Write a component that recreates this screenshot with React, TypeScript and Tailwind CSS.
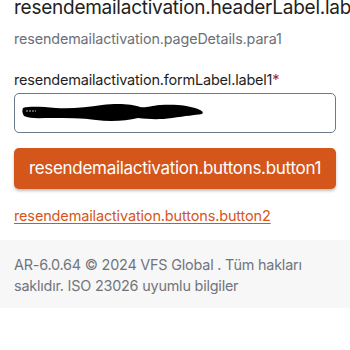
export default function App() {
  return (
    <div className="w-[350px] h-[350px] overflow-hidden bg-white font-['Inter',sans-serif]">
      <div className="px-[14px] -mt-[5px]">
        <h1 className="text-[19px] leading-[26px] tracking-[-0.25px] text-[#222] whitespace-nowrap">
          resendemailactivation.headerLabel.label1
        </h1>
        <p className="mt-[8px] text-[14.3px] leading-[20px] tracking-[-0.1px] text-[#6b6f76]">
          resendemailactivation.pageDetails.para1
        </p>
        <label className="block mt-[21px] text-[14.5px] leading-[20px] tracking-[-0.2px] text-[#1f1f1f]">
          resendemailactivation.formLabel.label1<span className="text-[#b3261e]">*</span>
        </label>
        <div className="mt-[3px] h-[40px] rounded-[5px] border-[1.5px] border-[#6b7a89] flex items-center pl-[7px]">
          <svg width="182" height="20" viewBox="0 0 182 20">
            <path
              d="M1 5 C8 3 20 4 34 5 C50 6 66 4 80 2 C96 0 110 1 118 4 C124 5 128 3 138 2 C152 1 166 2 176 6 C180 8 182 9 180 11 C172 12 164 13 150 15 C136 17 126 16 116 15 C104 18 88 19 74 17 C60 15 44 15 30 15 C18 15 8 16 2 13 C0 10 0 7 1 5 Z"
              fill="#000"
            />
            <path d="M4 8 L14 8" stroke="#bbb" strokeWidth="1" strokeDasharray="2 1" />
          </svg>
        </div>
        <button className="mt-[15px] w-full h-[41px] rounded-[5px] bg-[#d4561b] text-white text-[17px] tracking-[-0.3px] shadow-[0_2px_3px_rgba(0,0,0,0.25)]">
          resendemailactivation.buttons.button1
        </button>
        <a className="block mt-[17px] text-[14.5px] leading-[20px] tracking-[-0.15px] text-[#d4561b] underline underline-offset-2">
          resendemailactivation.buttons.button2
        </a>
      </div>
      <footer className="mt-[14px] bg-[#f7f7f8] px-[14px] pt-[15px] pb-[12px] text-[14.4px] leading-[20.5px] tracking-[-0.2px] text-[#71757b]">
        AR-6.0.64 © 2024 VFS Global . Tüm hakları saklıdır. ISO 23026 uyumlu bilgiler
      </footer>
    </div>
  );
}
